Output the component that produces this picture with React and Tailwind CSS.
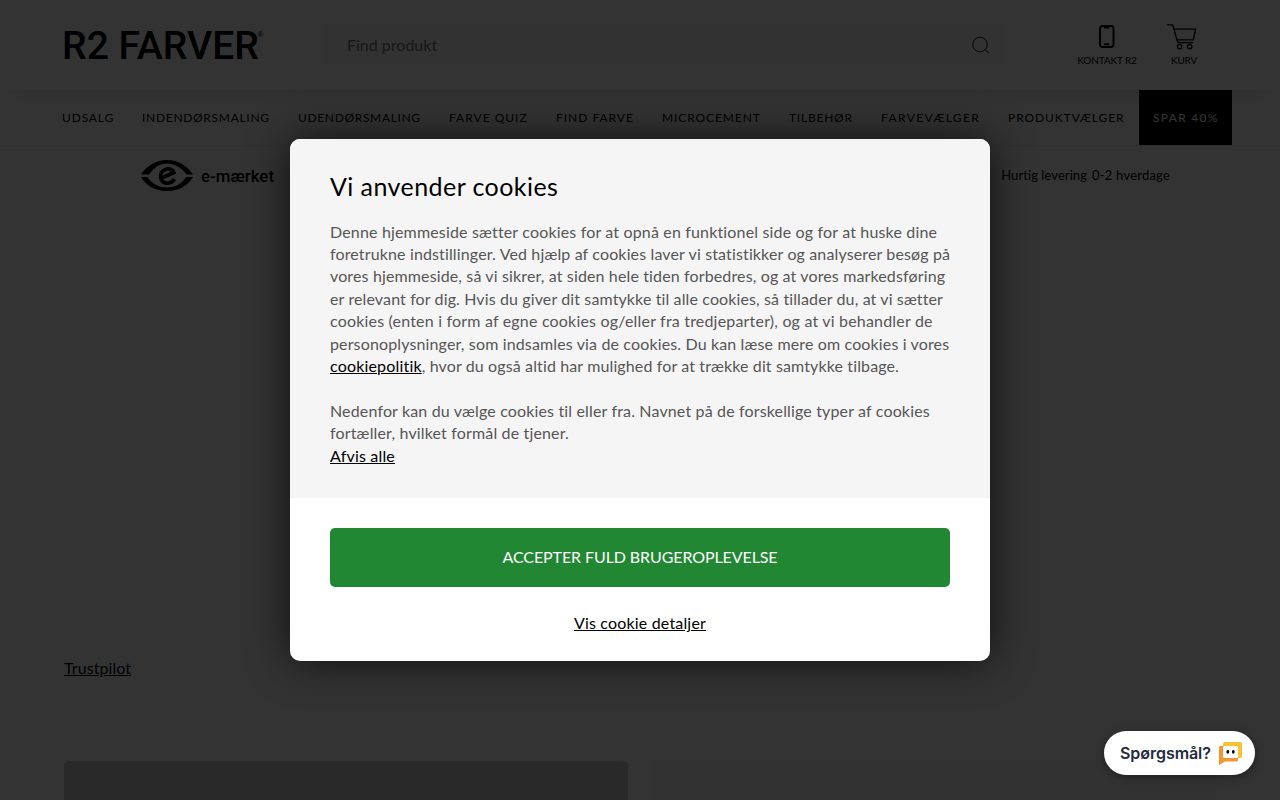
const navItems = [
  { label: "UDSALG", box: "w-[80px] tracking-[0.84px]" },
  { label: "INDENDØRSMALING", box: "w-[156px] tracking-[0.7px]" },
  { label: "UDENDØRSMALING", box: "w-[151px] tracking-[0.66px]" },
  { label: "FARVE QUIZ", box: "w-[107px] tracking-[1px]" },
  { label: "FIND FARVE", box: "w-[106px] tracking-[0.98px]" },
  { label: "MICROCEMENT", box: "w-[127px] tracking-[0.9px]" },
  { label: "TILBEHØR", box: "w-[92px] tracking-[0.77px]" },
  { label: "FARVEVÆLGER", box: "w-[127px] tracking-[1.4px]" },
  { label: "PRODUKTVÆLGER", box: "w-[145px] tracking-[0.92px]" },
];

const introLines = [
  { text: "Denne hjemmeside sætter cookies for at opnå en funktionel side og for at huske dine", track: "tracking-[0.162px]" },
  { text: "foretrukne indstillinger. Ved hjælp af cookies laver vi statistikker og analyserer besøg på", track: "tracking-[0.138px]" },
  { text: "vores hjemmeside, så vi sikrer, at siden hele tiden forbedres, og at vores markedsføring", track: "tracking-[0.134px]" },
  { text: "er relevant for dig. Hvis du giver dit samtykke til alle cookies, så tillader du, at vi sætter", track: "tracking-[0.12px]" },
  { text: "cookies (enten i form af egne cookies og/eller fra tredjeparter), og at vi behandler de", track: "tracking-[0.19px]" },
  { text: "personoplysninger, som indsamles via de cookies. Du kan læse mere om cookies i vores", track: "tracking-[0.14px]" },
];

function Logo() {
  return (
    <svg width="210" height="44" viewBox="0 0 210 44" className="-ml-1 block">
      <text x="2" y="34" fontFamily="Roboto, sans-serif" fontWeight="500" fontSize="38" textLength="197" lengthAdjust="spacingAndGlyphs">
        R2 FARVER
      </text>
      <text x="197.500" y="12" fontFamily="'Liberation Sans', sans-serif" fontSize="8">®</text>
    </svg>
  );
}

function EyeIcon() {
  return (
    <svg width="52" height="32" viewBox="0 0 52 32" className="block">
      <path d="M0 14.500C6 5.500 15 0 26 0s20 5.500 26 14.500h-6.500C41 8.500 34.500 3.500 26 3.500S12.500 8.500 8 14.500z" />
      <path d="M0 17h6.500C10.500 23 17 27.500 26 27.500S41.500 23 45 17h7C46.500 26 37.500 31 26 31S5.500 26 0 17z" />
      <path
        d="M19.500 18.500L33 12.500C31.500 9.500 28.500 8.300 25.500 9c-4 1-6.500 4.500-6 8.500s4.500 6.500 8.500 5.500c2.500-.6 4.300-2 5.500-4"
        fill="none"
        stroke="black"
        strokeWidth="3.600"
      />
    </svg>
  );
}

function SearchIcon() {
  return (
    <svg width="18" height="18" viewBox="0 0 18 18" fill="none" stroke="black" strokeWidth="0.900">
      <circle cx="8" cy="8.500" r="7.300" />
      <path d="M13.200 13.700l3.800 3.500" />
    </svg>
  );
}

function PhoneIcon() {
  return (
    <svg width="16" height="24" viewBox="0 0 16 24" fill="none" stroke="black" strokeWidth="1.900">
      <rect x="1" y="1" width="13.500" height="21" rx="2.500" />
      <path d="M5 2.500h5.500M5.200 19.300h5" />
    </svg>
  );
}

function CartIcon() {
  return (
    <svg width="30" height="26" viewBox="0 0 30 26" fill="none" stroke="black" strokeWidth="1.300">
      <path d="M.3 .8h4.500c.6 0 1 .3 1.200.9L10.300 17c.3 1.200 1 1.700 2 1.700h14" />
      <path d="M6.800 5.200h21.900l-2.500 10.600H10" />
      <circle cx="12.600" cy="22.600" r="2.200" />
      <circle cx="22.700" cy="22.600" r="2.200" />
    </svg>
  );
}

function ChatIcon() {
  return (
    <svg width="24" height="24" viewBox="0 0 24 24" className="block">
      <rect x="4" y="0" width="19" height="16" rx="2" fill="#f9c233" />
      <path d="M2 4h17v14a1.500 1.500 0 0 1-1.500 1.500H6L0 23.300V6a2 2 0 0 1 2-2z" fill="#f0982f" />
      <path d="M4 3.500h19V14a2 2 0 0 1-2 2H4z" fill="#f9c233" />
      <path d="M2 4h4v12H0V6a2 2 0 0 1 2-2z" fill="#f0982f" />
      <rect x="4" y="4" width="15" height="12" rx="1.500" fill="white" />
      <ellipse cx="8.800" cy="9.800" rx="1.400" ry="1.900" />
      <ellipse cx="14.300" cy="9.800" rx="1.400" ry="1.900" />
    </svg>
  );
}

function Header() {
  return (
    <header className="relative flex h-[90px] shrink-0 bg-white pl-16 shadow-[0_15px_20px_-15px_rgba(0,0,0,0.15)]">

      <div className="w-[258px] pt-[25px]">
        <Logo />
      </div>

      <div className="mt-6 flex h-[41px] w-[682px] items-center justify-between rounded-[5px] bg-[#f8f8f8] pr-[14px] pl-[25px]">
        <span className="pt-px text-[16px] text-[#757575]">Find produkt</span>
        <SearchIcon />
      </div>

      <div className="ml-[73px] flex w-[60px] flex-col items-center pt-[25px]">
        <PhoneIcon />
        <span className="mt-[5px] text-[10px] leading-3 tracking-[-0.1px] whitespace-nowrap">KONTAKT R2</span>
      </div>

      <div className="ml-[30px] flex w-[30px] flex-col pt-6">
        <CartIcon />
        <span className="mt-1 pl-1 text-[10px] leading-3 tracking-[-0.2px] whitespace-nowrap">KURV</span>
      </div>

    </header>
  );
}

function Nav() {
  return (
    <nav className="flex h-14 shrink-0 border-b border-[#f0f0f0] pl-12 text-[12px]">
      {navItems.map((item) => (
        <div key={item.label} className={`${item.box} flex h-[55px] shrink-0 items-center pl-[14px] whitespace-nowrap`}>
          {item.label}
        </div>
      ))}
      <div className="relative flex h-[55px] w-[93px] items-center bg-black pl-[14px] tracking-[1.300px] whitespace-nowrap text-white">
        SPAR 40%
      </div>
    </nav>
  );
}

function CookieDialog() {
  return (
    <div className="w-[700px] overflow-hidden rounded-[10px] bg-white shadow-[0_0_40px_rgba(0,0,0,0.7)]">

      <div className="h-[359px] bg-[#f5f5f5] px-10 pt-[30px] text-[16px] leading-[22.4px] whitespace-nowrap text-[#555]">
        <h2 className="mb-[16.6px] h-[35px] text-[25px] leading-[35px] tracking-[0.43px] text-black">
          Vi anvender cookies
        </h2>

        {introLines.map((line) => (
          <p key={line.text} className={line.track}>{line.text}</p>
        ))}
        <p>
          <a className="tracking-[0.177px] text-black underline">cookiepolitik</a>
          <span className="tracking-[0.125px]">, hvor du også altid har mulighed for at trække dit samtykke tilbage.</span>
        </p>

        <p className="mt-[22.4px] tracking-[0.152px]">
          Nedenfor kan du vælge cookies til eller fra. Navnet på de forskellige typer af cookies
        </p>
        <p className="tracking-[0.156px]">fortæller, hvilket formål de tjener.</p>
        <a className="block tracking-[0.184px] text-black underline">Afvis alle</a>
      </div>

      <div className="flex h-[163px] flex-col items-center px-10 pt-[30px] text-[16px]">
        <button className="h-[59px] w-full rounded-[5px] bg-[#218732] pb-[2px] tracking-[-0.09px] text-white">
          ACCEPTER FULD BRUGEROPLEVELSE
        </button>
        <a className="mt-6 leading-6 tracking-[0.17px] text-black underline">Vis cookie detaljer</a>
      </div>

    </div>
  );
}

export default function App() {
  return (
    <div className="relative h-[800px] w-[1280px] overflow-hidden bg-white font-['Lato',sans-serif] text-black">

      <div className="flex h-full flex-col">
        <Header />
        <Nav />

        {/* USP bar */}
        <div className="flex h-[58px] shrink-0 items-center justify-between pr-[110px] pl-[141px]">
          <div className="flex items-center gap-2 pt-[2px]">
            <EyeIcon />
            <svg width="76" height="24" className="block">
              <text x="0" y="18" fontFamily="Roboto, sans-serif" fontWeight="500" fontSize="17" textLength="73" lengthAdjust="spacingAndGlyphs">
                e-mærket
              </text>
            </svg>
          </div>
          <div className="flex gap-[5px] pt-px text-[13px] whitespace-nowrap">
            <span className="tracking-[0.07px]">Hurtig levering</span>
            <span className="tracking-[0.21px]">0-2 hverdage</span>
          </div>
        </div>

        <div className="mt-[453px] shrink-0 pl-16 text-[16px] leading-[22.4px]">
          <a className="tracking-[0.07px] underline">Trustpilot</a>
        </div>

        <div className="mt-[81.6px] flex shrink-0 gap-6 px-16">
          <div className="h-[100px] flex-1 rounded-t-[5px] bg-[#cdcdcd]" />
          <div className="h-[100px] flex-1 rounded-t-[5px] bg-[#f8f8f8]" />
        </div>
      </div>

      {/* Overlay */}
      <div className="absolute inset-0 flex items-center justify-center bg-black/80">
        <CookieDialog />
      </div>

      {/* Chat button */}
      <button className="absolute right-[25px] bottom-[25px] flex h-11 w-[151px] items-center justify-between rounded-full bg-white pr-3 pl-4 font-['Inter',sans-serif] text-[16px] font-semibold text-[#1f2b3d] shadow-[0_2px_8px_rgba(0,0,0,0.4)]">
        <span className="tracking-[-0.05px] whitespace-nowrap">Spørgsmål?</span>
        <span className="pt-px">
          <ChatIcon />
        </span>
      </button>

    </div>
  );
}
